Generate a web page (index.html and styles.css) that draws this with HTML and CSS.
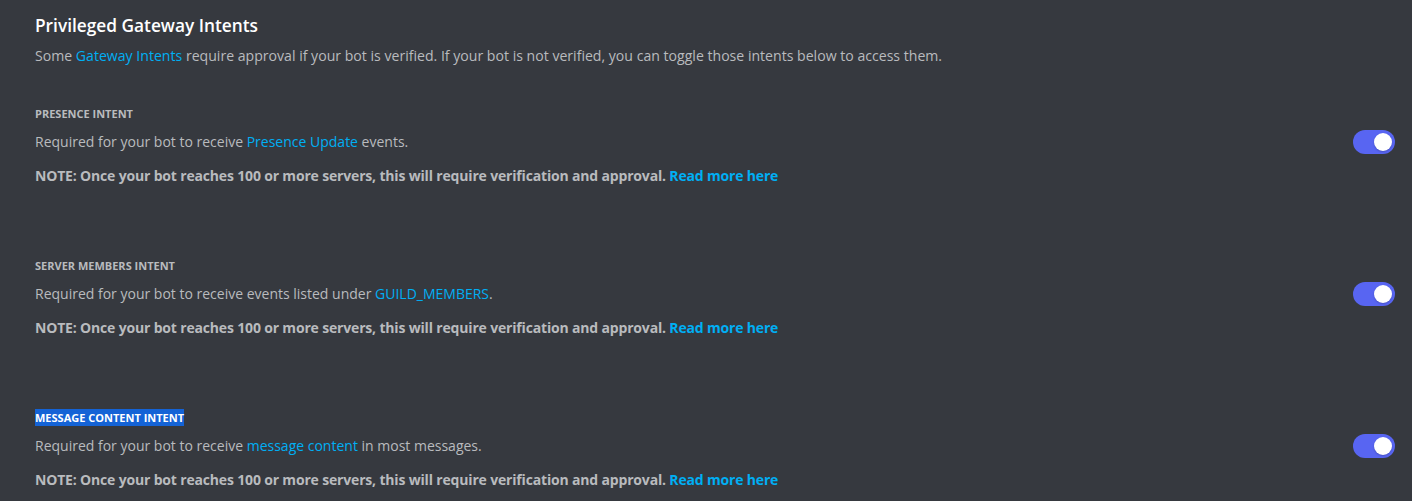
FILE: index.html
```html
<!DOCTYPE html>
<html>
<head>
<meta charset="utf-8">
<link rel="stylesheet" href="styles.css">
</head>
<body>
<div class="page">
  <h2 class="title">Privileged Gateway Intents</h2>
  <p class="intro">Some <a class="link">Gateway Intents</a> require approval if your bot is verified. If your bot is not verified, you can toggle those intents below to access them.</p>

  <section class="intent">
    <div class="intent-text">
      <h3 class="label">PRESENCE INTENT</h3>
      <p class="desc">Required for your bot to receive <a class="link">Presence Update</a> events.</p>
      <p class="note">NOTE: Once your bot reaches 100 or more servers, this will require verification and approval. <a class="link">Read more here</a></p>
    </div>
    <div class="toggle"><span class="knob"></span></div>
  </section>

  <section class="intent">
    <div class="intent-text">
      <h3 class="label">SERVER MEMBERS INTENT</h3>
      <p class="desc">Required for your bot to receive events listed under <a class="link">GUILD_MEMBERS</a>.</p>
      <p class="note">NOTE: Once your bot reaches 100 or more servers, this will require verification and approval. <a class="link">Read more here</a></p>
    </div>
    <div class="toggle"><span class="knob"></span></div>
  </section>

  <section class="intent">
    <div class="intent-text">
      <h3 class="label"><span class="selected">MESSAGE CONTENT INTENT</span></h3>
      <p class="desc">Required for your bot to receive <a class="link">message content</a> in most messages.</p>
      <p class="note">NOTE: Once your bot reaches 100 or more servers, this will require verification and approval. <a class="link">Read more here</a></p>
    </div>
    <div class="toggle"><span class="knob"></span></div>
  </section>
</div>
</body>
</html>
```

FILE: styles.css
```css
html, body {
  margin: 0;
  padding: 0;
  background: #36393f;
  height: 100%;
}
body {
  font-family: "Open Sans", "Noto Sans", sans-serif;
  color: #b9bbbe;
  overflow: hidden;
}
.page {
  padding: 14px 17px 0 35px;
}
.title {
  margin: 0;
  font-size: 17.3px;
  line-height: 24px;
  font-weight: 600;
  color: #ffffff;
}
.intro {
  margin: 8px 0 0 0;
  font-size: 14.1px;
  line-height: 20px;
}
.link {
  color: #00aff4;
  text-decoration: none;
}
.intent {
  display: flex;
  justify-content: space-between;
  align-items: flex-start;
  height: 152px;
}
.intent:first-of-type {
  margin-top: 40px;
}
.intent-text {
  display: flex;
  flex-direction: column;
}
.label {
  margin: 0;
  font-size: 11px;
  line-height: 16px;
  font-weight: 700;
  color: #b9bbbe;
}
.selected {
  background: #1463d6;
  color: #ffffff;
  padding: 1px 0;
}
.desc {
  margin: 10px 0 0 0;
  font-size: 14px;
  line-height: 20px;
}
.note {
  margin: 14px 0 0 0;
  font-size: 14px;
  line-height: 20px;
  font-weight: 700;
  letter-spacing: -0.17px;
}
.toggle {
  margin-top: 24px;
  width: 42px;
  height: 24px;
  border-radius: 12px;
  background: #5865f2;
  display: flex;
  align-items: center;
  justify-content: flex-end;
  padding: 0 3px;
  box-sizing: border-box;
}
.knob {
  width: 18px;
  height: 18px;
  border-radius: 50%;
  background: #ffffff;
  box-shadow: 0 1px 2px rgba(0, 0, 0, 0.2);
}
```
